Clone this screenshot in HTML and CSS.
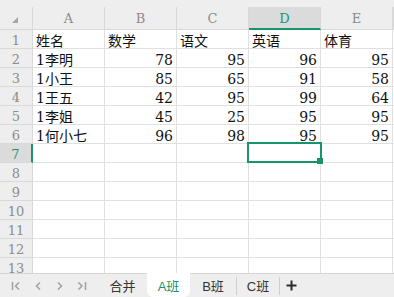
FILE: index.html
```html
<!DOCTYPE html>
<html lang="zh-CN">
<head>
    <meta charset="UTF-8">
    <meta name="viewport" content="width=device-width, initial-scale=1.0">
    <title>成绩表</title>
    <link rel="stylesheet" href="styles.css">
</head>
<body>
    <div class="topbar"></div>

    <!-- sheet grid -->
    <div class="sheet">
        <div class="row head">
            <div class="corner"><span class="tri"></span></div>
            <div class="ch">A</div>
            <div class="ch">B</div>
            <div class="ch">C</div>
            <div class="ch on">D</div>
            <div class="ch">E</div>
            <div class="ch"></div>
        </div>
        <div class="row">
            <div class="rh">1</div>
            <div>姓名</div><div>数学</div><div>语文</div><div>英语</div><div>体育</div><div></div>
        </div>
        <div class="row">
            <div class="rh">2</div>
            <div>1李明</div><div class="n">78</div><div class="n">95</div><div class="n">96</div><div class="n">95</div><div></div>
        </div>
        <div class="row">
            <div class="rh">3</div>
            <div>1小王</div><div class="n">85</div><div class="n">65</div><div class="n">91</div><div class="n">58</div><div></div>
        </div>
        <div class="row">
            <div class="rh">4</div>
            <div>1王五</div><div class="n">42</div><div class="n">95</div><div class="n">99</div><div class="n">64</div><div></div>
        </div>
        <div class="row">
            <div class="rh">5</div>
            <div>1李姐</div><div class="n">45</div><div class="n">25</div><div class="n">95</div><div class="n">95</div><div></div>
        </div>
        <div class="row">
            <div class="rh">6</div>
            <div>1何小七</div><div class="n">96</div><div class="n">98</div><div class="n">95</div><div class="n">95</div><div></div>
        </div>
        <div class="row">
            <div class="rh on">7</div>
            <div></div><div></div><div></div><div></div><div></div><div></div>
        </div>
        <div class="row">
            <div class="rh">8</div>
            <div></div><div></div><div></div><div></div><div></div><div></div>
        </div>
        <div class="row">
            <div class="rh">9</div>
            <div></div><div></div><div></div><div></div><div></div><div></div>
        </div>
        <div class="row">
            <div class="rh">10</div>
            <div></div><div></div><div></div><div></div><div></div><div></div>
        </div>
        <div class="row">
            <div class="rh">11</div>
            <div></div><div></div><div></div><div></div><div></div><div></div>
        </div>
        <div class="row">
            <div class="rh">12</div>
            <div></div><div></div><div></div><div></div><div></div><div></div>
        </div>
        <div class="row">
            <div class="rh">13</div>
            <div></div><div></div><div></div><div></div><div></div><div></div>
        </div>

        <!-- active cell D7 -->
        <div class="selection"><span class="handle"></span></div>
    </div>

    <!-- sheet tabs -->
    <div class="tabbar">
        <div class="nav">
            <span class="navbtn">
                <svg width="10" height="10" viewBox="0 0 10 10"><path d="M1.5 1v8M8 1.5L4.5 5 8 8.5"/></svg>
            </span>
            <span class="navbtn">
                <svg width="10" height="10" viewBox="0 0 10 10"><path d="M7 1.5L3.5 5 7 8.5"/></svg>
            </span>
            <span class="navbtn">
                <svg width="10" height="10" viewBox="0 0 10 10"><path d="M3 1.5L6.5 5 3 8.5"/></svg>
            </span>
            <span class="navbtn">
                <svg width="10" height="10" viewBox="0 0 10 10"><path d="M1.5 1.5L5 5 1.5 8.5M8.5 1v8"/></svg>
            </span>
        </div>
        <div class="tab tab-merge">合并</div>
        <div class="tab tab-a active">A班</div>
        <div class="tab tab-b">B班</div>
        <div class="sep"></div>
        <div class="tab tab-c">C班</div>
        <div class="sep"></div>
        <span class="add">
            <svg width="11" height="11" viewBox="0 0 11 11"><path d="M5.5 0.5v10M0.5 5.5h10"/></svg>
        </span>
    </div>
</body>
</html>
```

FILE: styles.css
```css
body {
    margin: 0;
    width: 394px;
    height: 297px;
    overflow: hidden;
    background-color: #fff;
    font-family: "DejaVu Serif", "Noto Sans CJK SC", serif;
    color: #111;
}

.topbar {
    height: 7px;
    background-color: #eeeeee;
}

.sheet {
    position: relative;
    height: 266px;
    overflow: hidden;
}

.row {
    display: grid;
    grid-template-columns: 33px repeat(5, 72px) 1fr;
    height: 19px;
}

.row > div {
    box-sizing: border-box;
    height: 19px;
    padding: 2px 3px 0;
    line-height: 18px;
    font-size: 14px;
    white-space: nowrap;
    overflow: hidden;
    border-right: 1px solid #e0e0e0;
    border-bottom: 1px solid #e0e0e0;
}

.row > div.n {
    text-align: right;
}

/* column header */
.row.head {
    height: 23px;
}

.row.head > div {
    height: 23px;
    padding: 1px 0 0;
    line-height: 22px;
    font-size: 13px;
    text-align: center;
    color: #8c8c8c;
    background-color: #eeeeee;
    border-color: #d9d9d9;
}

.row.head > .ch.on {
    background-color: #dbdbdb;
    color: #1b9873;
    border-bottom: 2px solid #17946a;
}

.corner {
    position: relative;
}

.tri {
    position: absolute;
    left: 12px;
    top: 10px;
    width: 0;
    height: 0;
    border-left: 6px solid transparent;
    border-bottom: 6px solid #a6a6a6;
}

/* row header */
.row > .rh {
    padding: 2px 0 0;
    font-size: 13px;
    text-align: center;
    color: #8c8c8c;
    background-color: #eeeeee;
    border-color: #d9d9d9;
}

.row > .rh.on {
    background-color: #dbdbdb;
    color: #1b9873;
    border-right: 2px solid #17946a;
}

.selection {
    position: absolute;
    left: 247px;
    top: 135px;
    width: 75px;
    height: 21px;
    box-sizing: border-box;
    border: 2px solid #17946a;
}

.handle {
    position: absolute;
    right: -3px;
    bottom: -3px;
    width: 6px;
    height: 6px;
    background-color: #17946a;
}

/* tabs */
.tabbar {
    box-sizing: border-box;
    height: 24px;
    display: flex;
    align-items: stretch;
    background-color: #eeeeee;
    border-top: 1px solid #d6d6d6;
    font-family: "Liberation Sans", "Noto Sans CJK SC", sans-serif;
    font-size: 13px;
    color: #333;
}

.nav {
    display: flex;
    width: 98px;
    padding-left: 5px;
    box-sizing: border-box;
}

.navbtn {
    width: 22px;
    display: flex;
    align-items: center;
    justify-content: center;
}

.navbtn svg {
    fill: none;
    stroke: #a0a0a0;
    stroke-width: 1.5;
}

.tab {
    display: flex;
    align-items: center;
    justify-content: center;
}

.tab-merge {
    width: 49px;
}

.tab-a {
    width: 43px;
}

.tab-b {
    width: 46px;
}

.tab-c {
    width: 42px;
}

.tab.active {
    margin-top: -1px;
    background-color: #fff;
    color: #17946a;
    border-radius: 0 0 6px 6px;
}

.sep {
    width: 1px;
    margin: 3px 0 2px;
    background-color: #cfcfcf;
}

.add {
    display: flex;
    align-items: center;
    margin-left: 6px;
}

.add svg {
    stroke: #2b2b2b;
    stroke-width: 2;
}
```
